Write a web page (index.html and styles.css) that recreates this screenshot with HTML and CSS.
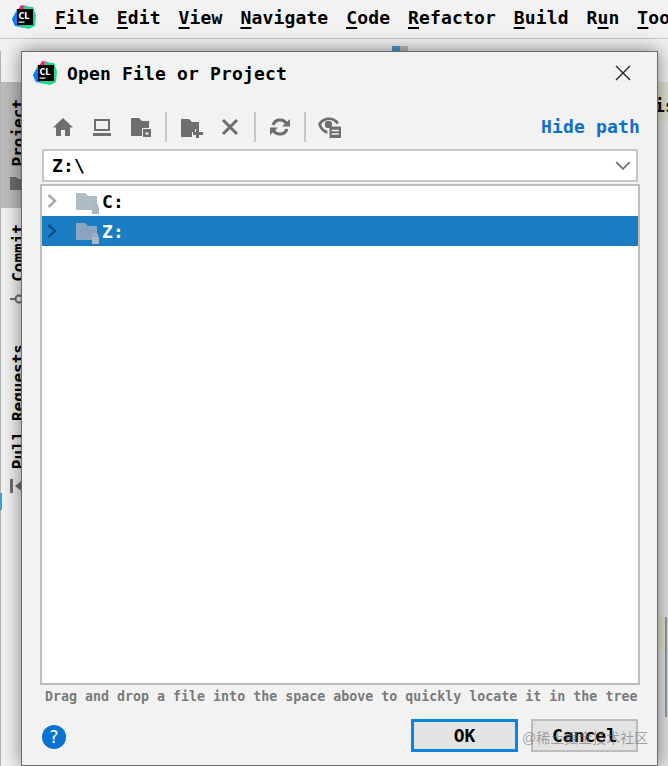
FILE: index.html
```html
<!DOCTYPE html>
<html lang="en">
<head>
    <meta charset="UTF-8">
    <title>Open File or Project</title>
    <link rel="stylesheet" href="styles.css">
</head>
<body>
    <svg class="defs" width="0" height="0">
        <symbol id="clion" viewBox="0 0 24 24">
            <path d="M0 14 L5 4 L13 6 L12 23 L3 21 Z" fill="#12b5cb"/>
            <path d="M6 5 L9 0 L15 1 L14 8 Z" fill="#ee2a7b"/>
            <path d="M12 1 L21 2 L24 10 L23 21 L17 24 L9 22 Z" fill="#21d789"/>
            <path d="M0 14 L5 7 L7 21 L3 21 Z" fill="#087cfa"/>
            <rect x="5" y="4" width="16" height="16" fill="#000"/>
            <text x="6.500" y="13.500" class="logo-text">CL</text>
            <rect x="6.500" y="16.500" width="6" height="1.200" fill="#fff"/>
        </symbol>
        <symbol id="locked-folder" viewBox="0 0 24 24">
            <path d="M0 0 H9 L12 3 H21 V17 H0 Z" fill="currentColor"/>
            <rect x="16" y="14" width="7" height="7" fill="#a9b7c4"/>
            <path d="M17.500 14 V12 Q19.500 9 21.500 12 V14" fill="none" stroke="#a9b7c4" stroke-width="1.400"/>
        </symbol>
    </svg>

    <div class="ide">
        <!-- Menu bar -->
        <nav class="menubar">
            <svg class="logo"><use href="#clion"/></svg>
            <ul class="menu">
                <li><u>F</u>ile</li>
                <li><u>E</u>dit</li>
                <li><u>V</u>iew</li>
                <li><u>N</u>avigate</li>
                <li><u>C</u>ode</li>
                <li><u>R</u>efactor</li>
                <li><u>B</u>uild</li>
                <li>R<u>u</u>n</li>
                <li><u>T</u>ools</li>
            </ul>
        </nav>

        <div class="toolstrip">
            <span class="tab-mark blue"></span>
            <span class="tab-mark grey"></span>
        </div>

        <div class="workspace">
            <!-- Tool window tabs, mostly hidden by the dialog -->
            <aside class="side-tabs">
                <div class="side-tab side-tab-project">
                    <span class="side-label">Project</span>
                    <svg class="side-icon" viewBox="0 0 14 14"><path d="M0 1 H6 L8 3 H14 V14 H0 Z" fill="#6e6e6e"/></svg>
                </div>
                <div class="side-tab side-tab-commit">
                    <span class="side-label">Commit</span>
                    <svg class="side-icon" viewBox="0 0 14 14"><circle cx="9" cy="7" r="3.500" fill="none" stroke="#6e6e6e" stroke-width="2"/><path d="M0 7 H5.500" stroke="#6e6e6e" stroke-width="2"/></svg>
                </div>
                <div class="side-tab side-tab-pull">
                    <span class="side-label">Pull Requests</span>
                    <svg class="side-icon" viewBox="0 0 14 14"><path d="M0 0 H3 V14 H0 Z M14 0 V14 L5 7 Z" fill="#6e6e6e"/></svg>
                </div>
                <span class="side-mark"></span>
            </aside>

            <div class="editor-edge">
                <div class="edge-top"></div>
                <div class="edge-banner"><span class="edge-text">is</span></div>
                <div class="edge-fill"></div>
                <div class="edge-banner edge-banner-low"></div>
                <div class="edge-rest"></div>
                <span class="scroll-thumb"></span>
            </div>
        </div>

        <!-- Dialog -->
        <section class="dialog">
            <header class="dialog-title">
                <svg class="logo"><use href="#clion"/></svg>
                <h1>Open File or Project</h1>
                <svg class="close" viewBox="0 0 16 16"><path d="M1 1 L15 15 M15 1 L1 15" stroke="#222" stroke-width="1.400"/></svg>
            </header>

            <div class="toolbar">
                <div class="tools">
                    <svg class="tool" viewBox="0 0 20 20"><path d="M10 1 L20 10.500 H17 V19 H12 V13 H8 V19 H3 V10.500 H0 Z"/></svg>
                    <svg class="tool" viewBox="0 0 20 20"><path fill-rule="evenodd" d="M2 2 H18 V14 H2 Z M4 4 V12 H16 V4 Z M1 16 H19 V19 H1 Z"/></svg>
                    <svg class="tool" viewBox="0 0 20 20"><path fill-rule="evenodd" d="M0 1 H8 L11 4 H18 V11 H11 V19 H0 Z M12 12 H20 V20 H12 Z M14.500 15.500 V17.500 H17.500 V15.500 Z"/></svg>
                    <i class="tool-sep"></i>
                    <svg class="tool" viewBox="0 0 20 20"><path d="M0 2 H8 L11 5 H18 V12 H14 V15 H11 V20 H0 Z M15 12 H18 V15 H22 V18 H18 V21 H15 V18 H12 V15 H15 Z"/></svg>
                    <svg class="tool" viewBox="0 0 20 20"><path d="M3 3 L17 17 M17 3 L3 17" fill="none" stroke-width="3"/></svg>
                    <i class="tool-sep"></i>
                    <svg class="tool" viewBox="0 0 20 20"><path d="M16.500 6.500 A7.500 7.500 0 0 0 3 8 M3.500 13.500 A7.500 7.500 0 0 0 17 12" fill="none" stroke-width="3"/><path d="M12 9.500 H20 V2 Z M8 10.500 H0 V18 Z"/></svg>
                    <i class="tool-sep"></i>
                    <svg class="tool tool-wide" viewBox="0 0 22 22"><path fill-rule="evenodd" d="M0 9 C3 1 15 0 20 7 L18 9 C14 3 6 4 3 9 C4 12 6 14 9 15 V18 C5 17 2 14 0 9 Z"/><circle cx="10" cy="9" r="3.500"/><path fill-rule="evenodd" d="M11 11 H22 V22 H11 Z M13 14 V15.500 H20 V14 Z M13 17.500 V19 H20 V17.500 Z"/></svg>
                </div>
                <a class="hide-path">Hide path</a>
            </div>

            <div class="path-field">
                <span>Z:\</span>
                <svg class="path-arrow" viewBox="0 0 14 8"><path d="M1 1 L7 7 L13 1" fill="none" stroke="#6e6e6e" stroke-width="1.500"/></svg>
            </div>

            <div class="tree">
                <div class="tree-row">
                    <svg class="tree-arrow" viewBox="0 0 10 14"><path d="M1.500 1 L8 7 L1.500 13" fill="none" stroke-width="2.500"/></svg>
                    <svg class="tree-folder"><use href="#locked-folder"/></svg>
                    <span>C:</span>
                </div>
                <div class="tree-row selected">
                    <svg class="tree-arrow" viewBox="0 0 10 14"><path d="M1.500 1 L8 7 L1.500 13" fill="none" stroke-width="2.500"/></svg>
                    <svg class="tree-folder"><use href="#locked-folder"/></svg>
                    <span>Z:</span>
                </div>
            </div>

            <p class="hint">Drag and drop a file into the space above to quickly locate it in the tree</p>

            <footer class="dialog-actions">
                <span class="help">?</span>
                <button class="btn btn-default">OK</button>
                <button class="btn">Cancel</button>
            </footer>
        </section>

        <span class="watermark">@稀土掘金技术社区</span>
    </div>
</body>
</html>
```

FILE: styles.css
```css
* {
    margin: 0;
    padding: 0;
    box-sizing: border-box;
}

body {
    width: 668px;
    height: 766px;
    overflow: hidden;
    background: #f2f2f2;
    color: #000;
    font-family: "DejaVu Sans Mono", "Liberation Mono", monospace;
    font-weight: bold;
    font-size: 18px;
    letter-spacing: 0.16px;
}

.defs {
    position: absolute;
}

.logo-text {
    font-family: "DejaVu Sans", sans-serif;
    font-size: 8px;
    font-weight: bold;
    fill: #fff;
    letter-spacing: 0;
}

.ide {
    position: relative;
    width: 668px;
    height: 766px;
    display: flex;
    flex-direction: column;
    overflow: hidden;
}

/* Menu bar */
.menubar {
    height: 39px;
    flex: none;
    display: flex;
    align-items: flex-start;
    padding: 5px 0 0 12px;
    border-bottom: 1px solid #c9c9c9;
}

.logo {
    width: 24px;
    height: 24px;
    flex: none;
}

.menu {
    list-style: none;
    display: flex;
    gap: 17.8px;
    margin: 2px 0 0 19px;
    line-height: 22px;
    white-space: nowrap;
}

.menu u {
    text-decoration-thickness: 2px;
    text-underline-offset: 3px;
}

.toolstrip {
    height: 12px;
    flex: none;
    display: flex;
    align-items: flex-end;
    padding-left: 392px;
}

.tab-mark {
    width: 8px;
    height: 5px;
}

.tab-mark.blue {
    background: #3f9fd0;
}

.tab-mark.grey {
    background: #b9bec4;
}

.workspace {
    flex: 1;
    display: flex;
    justify-content: space-between;
    min-height: 0;
}

/* Tool window tabs */
.side-tabs {
    position: relative;
    width: 22px;
    display: flex;
    flex-direction: column;
    border-left: 1px solid #b4b4b4;
    font-size: 16px;
    letter-spacing: 0;
}

.side-tab {
    display: flex;
    flex-direction: column;
    align-items: flex-end;
    gap: 10px;
}

.side-tab-project {
    height: 126px;
    margin-top: 31px;
    padding-top: 17px;
    background: #bdbdbd;
}

.side-tab-commit {
    height: 120px;
    padding-top: 16px;
}

.side-tab-pull {
    padding-top: 16px;
}

.side-label {
    writing-mode: vertical-rl;
    transform: rotate(180deg);
    margin-right: -2px;
    line-height: 11px;
    white-space: nowrap;
}

.side-icon {
    width: 14px;
    height: 14px;
    flex: none;
    margin-right: -2px;
}

.side-mark {
    position: absolute;
    left: -1px;
    top: 442px;
    width: 2px;
    height: 17px;
    background: #3f9fd0;
}

/* Strip of editor visible right of the dialog */
.editor-edge {
    position: relative;
    width: 11px;
    display: flex;
    flex-direction: column;
}

.edge-top {
    height: 31px;
}

.edge-banner {
    height: 41px;
    background: #e3e3cf;
    overflow: hidden;
}

.edge-text {
    display: block;
    margin-left: -3px;
    line-height: 47px;
    white-space: nowrap;
}

.edge-banner-low {
    height: 34px;
}

.edge-fill {
    height: 494px;
    background: #e4e4e4;
}

.edge-rest {
    flex: 1;
    background: #e4e4e4;
}

.scroll-thumb {
    position: absolute;
    right: 1px;
    top: 566px;
    width: 2px;
    height: 100px;
    background: #7f9db5;
}

/* Dialog */
.dialog {
    position: absolute;
    left: 21px;
    top: 51px;
    width: 637px;
    height: 715px;
    display: flex;
    flex-direction: column;
    background: #f2f2f2;
    border: 1px solid #6a6a6a;
    box-shadow: 0 0 18px rgba(0, 0, 0, 0.5);
}

.dialog-title {
    height: 44px;
    flex: none;
    display: flex;
    align-items: center;
    padding: 0 26px 2px 11px;
}

.dialog-title h1 {
    flex: 1;
    margin-left: 10px;
    font-size: 18px;
}

.close {
    width: 16px;
    height: 16px;
}

.toolbar {
    height: 53px;
    flex: none;
    display: flex;
    align-items: center;
    justify-content: space-between;
    padding: 8px 17px 0 31px;
}

.tools {
    display: flex;
    align-items: center;
    gap: 19px;
}

.tool {
    width: 20px;
    height: 20px;
    overflow: visible;
    fill: #6e6e6e;
    stroke: #6e6e6e;
    stroke-width: 0;
}

.tool-wide {
    width: 23px;
    height: 23px;
    margin-left: -2px;
}

.tool-sep {
    width: 2px;
    height: 30px;
    margin: 0 -5px;
    background: #c8c8c8;
}

.hide-path {
    color: #0f6fc6;
}

.path-field {
    height: 33px;
    flex: none;
    display: flex;
    align-items: center;
    justify-content: space-between;
    margin: 0 19px 2px 20px;
    padding: 0 5px 0 8px;
    background: #fff;
    border: 2px solid #c6c6c6;
}

.path-arrow {
    width: 16px;
    height: 9px;
}

.tree {
    height: 501px;
    flex: none;
    margin: 0 17px 0 18px;
    background: #fff;
    border: 2px solid #bcbcbc;
}

.tree-row {
    height: 30px;
    display: flex;
    align-items: center;
    padding-left: 5px;
}

.tree-row.selected {
    background: #1a7dc4;
    color: #fff;
}

.tree-arrow {
    width: 10px;
    height: 14px;
    stroke: #ababab;
}

.tree-row.selected .tree-arrow {
    stroke: #0f4d80;
}

.tree-folder {
    width: 24px;
    height: 24px;
    margin: 8px 2px 0 19px;
    color: #b0bbc6;
}

.tree-row.selected .tree-folder {
    color: #8aa5bf;
}

.hint {
    flex: none;
    height: 24px;
    padding: 2px 0 0 23px;
    color: #7a7a7a;
    font-size: 13.3px;
    line-height: 20px;
    letter-spacing: 0;
    white-space: nowrap;
}

.dialog-actions {
    flex: 1;
    display: flex;
    align-items: flex-start;
    gap: 13px;
    padding: 10px 19px 0 20px;
}

.help {
    width: 24px;
    height: 24px;
    margin: 6px auto 0 0;
    border-radius: 50%;
    background: #0a73d1;
    color: #fff;
    font-family: "DejaVu Sans", sans-serif;
    font-size: 17px;
    font-weight: normal;
    line-height: 24px;
    text-align: center;
}

.btn {
    width: 107px;
    height: 33px;
    padding-bottom: 1px;
    background: #e3e3e3;
    border: 2px solid #bcbcbc;
    font: inherit;
    color: #000;
}

.btn-default {
    border: 3px solid #0a84de;
}

/* Site watermark over the screenshot */
.watermark {
    position: absolute;
    left: 522px;
    top: 729px;
    color: rgba(110, 110, 110, 0.6);
    font-family: "Liberation Sans", "Noto Sans CJK SC", sans-serif;
    font-size: 14px;
    font-weight: normal;
    line-height: 18px;
    letter-spacing: 0;
    white-space: nowrap;
}
```
